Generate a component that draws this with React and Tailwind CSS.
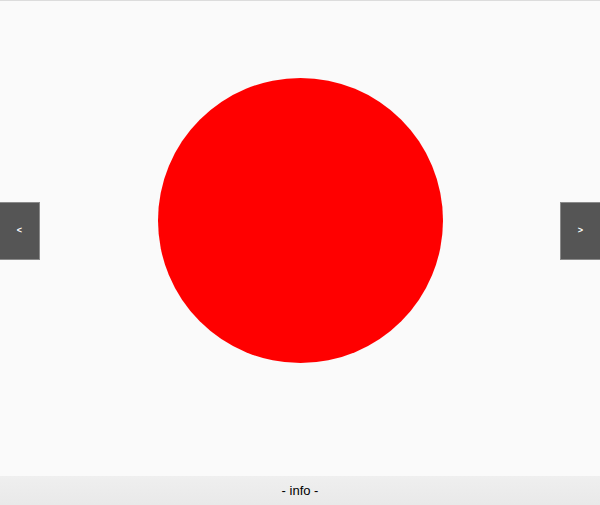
export default function App() {
  return (
    <div className="flex h-[505px] w-full flex-col border-t border-[#dcdcdc] bg-[#fafafa] font-['Liberation_Sans',Arial,sans-serif]">
      <div className="relative flex-1">
        <div className="mx-auto mt-[77px] h-[285px] w-[285px] rounded-full bg-[#ff0000]" />
        <button className="absolute left-0 top-[201px] flex h-[58px] w-[40px] items-center justify-center border border-l-0 border-[#8a8a8a] bg-[#555555] text-[9px] font-bold text-white">
          &lt;
        </button>
        <button className="absolute right-0 top-[201px] flex h-[58px] w-[40px] items-center justify-center border border-r-0 border-[#8a8a8a] bg-[#555555] text-[9px] font-bold text-white">
          &gt;
        </button>
      </div>
      <div className="flex h-[29px] items-center justify-center bg-gradient-to-b from-[#efefef] to-[#e9e9e9] text-[13px] text-black">
        - info -
      </div>
    </div>
  )
}
